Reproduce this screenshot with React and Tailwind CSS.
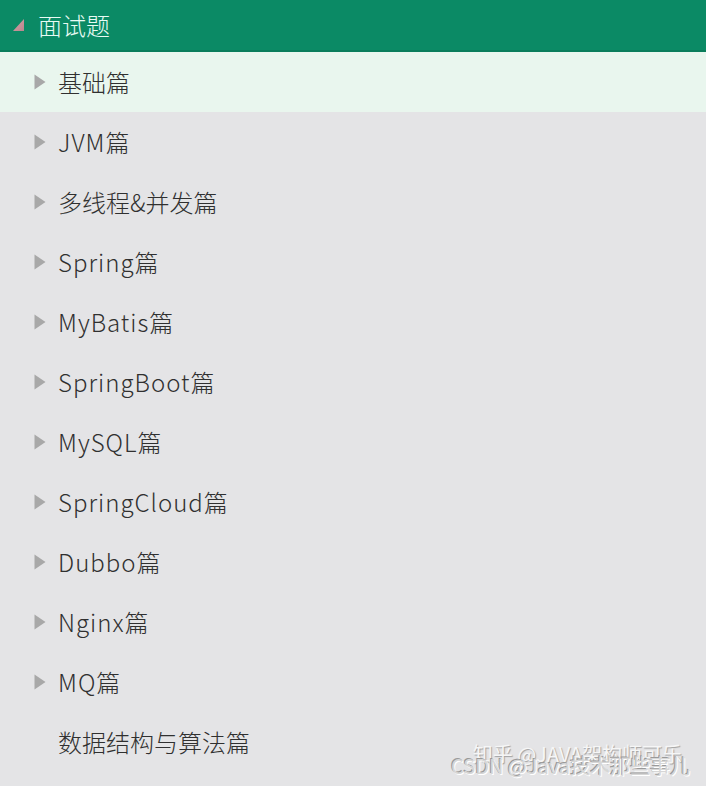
import React from "react";

const items = [
  "基础篇",
  "JVM篇",
  "多线程&并发篇",
  "Spring篇",
  "MyBatis篇",
  "SpringBoot篇",
  "MySQL篇",
  "SpringCloud篇",
  "Dubbo篇",
  "Nginx篇",
  "MQ篇",
];

function Arrow() {
  return (
    <svg width="12" height="16" viewBox="0 0 12 16" className="shrink-0 w-[12px] h-[16px]">
      <polygon points="0.5,0.5 11.5,8 0.5,15.5" fill="#a8a8a8" />
    </svg>
  );
}

function Label({ text }) {
  const m = text.match(/^([A-Za-z]+)(.*)$/);
  if (m) {
    return (
      <span className="text-[24px] leading-none font-light">
        <span className="tracking-[1px]">{m[1]}</span>
        {m[2]}
      </span>
    );
  }
  return <span className="text-[24px] leading-none font-light">{text}</span>;
}

export default function App() {
  return (
    <div
      className="relative w-[706px] h-[786px] overflow-hidden bg-[#e4e4e6] text-[#303030]"
      style={{ fontFamily: '"Noto Sans CJK SC", "Noto Sans", sans-serif' }}
    >
      <div className="flex items-center h-[52px] bg-[#0b8a65] border-b-2 border-[#0a7d5b] pl-[13px]">
        <svg width="12" height="14" viewBox="0 0 12 14" className="shrink-0 w-[12px] h-[14px]">
          <defs>
            <linearGradient id="tg" x1="0" y1="0" x2="1" y2="1">
              <stop offset="0" stopColor="#d9a0a6" />
              <stop offset="1" stopColor="#b9868e" />
            </linearGradient>
          </defs>
          <polygon points="11,1 11,13 0,13" fill="url(#tg)" />
        </svg>
        <span className="ml-[13px] text-[24px] leading-none text-[#e8fbf4] font-light">面试题</span>
      </div>
      <div className="flex flex-col">
        {items.map((t, i) => (
          <div
            key={t}
            className={
              "flex items-center h-[60px] pl-[34px] " +
              (i === 0 ? "bg-[#e9f6ee]" : "")
            }
          >
            <Arrow />
            <span className="ml-[12px] flex">
              <Label text={t} />
            </span>
          </div>
        ))}
        <div className="flex items-center h-[60px] pl-[58px]">
          <span className="text-[24px] leading-none font-light">数据结构与算法篇</span>
        </div>
      </div>
      <div className="absolute right-[24px] bottom-[22px] text-[20px] leading-none text-[#f6f6f6] [text-shadow:1px_1px_1px_#a0a0a0] whitespace-nowrap">
        知乎 @JAVA架构师可乐
      </div>
      <div className="absolute right-[16px] bottom-[10px] text-[20px] leading-none text-[#d6d6d6] [text-shadow:1px_1px_0_#ffffff,-1px_-1px_0_#9a9a9a] whitespace-nowrap">
        CSDN @Java技术那些事儿
      </div>
    </div>
  );
}
